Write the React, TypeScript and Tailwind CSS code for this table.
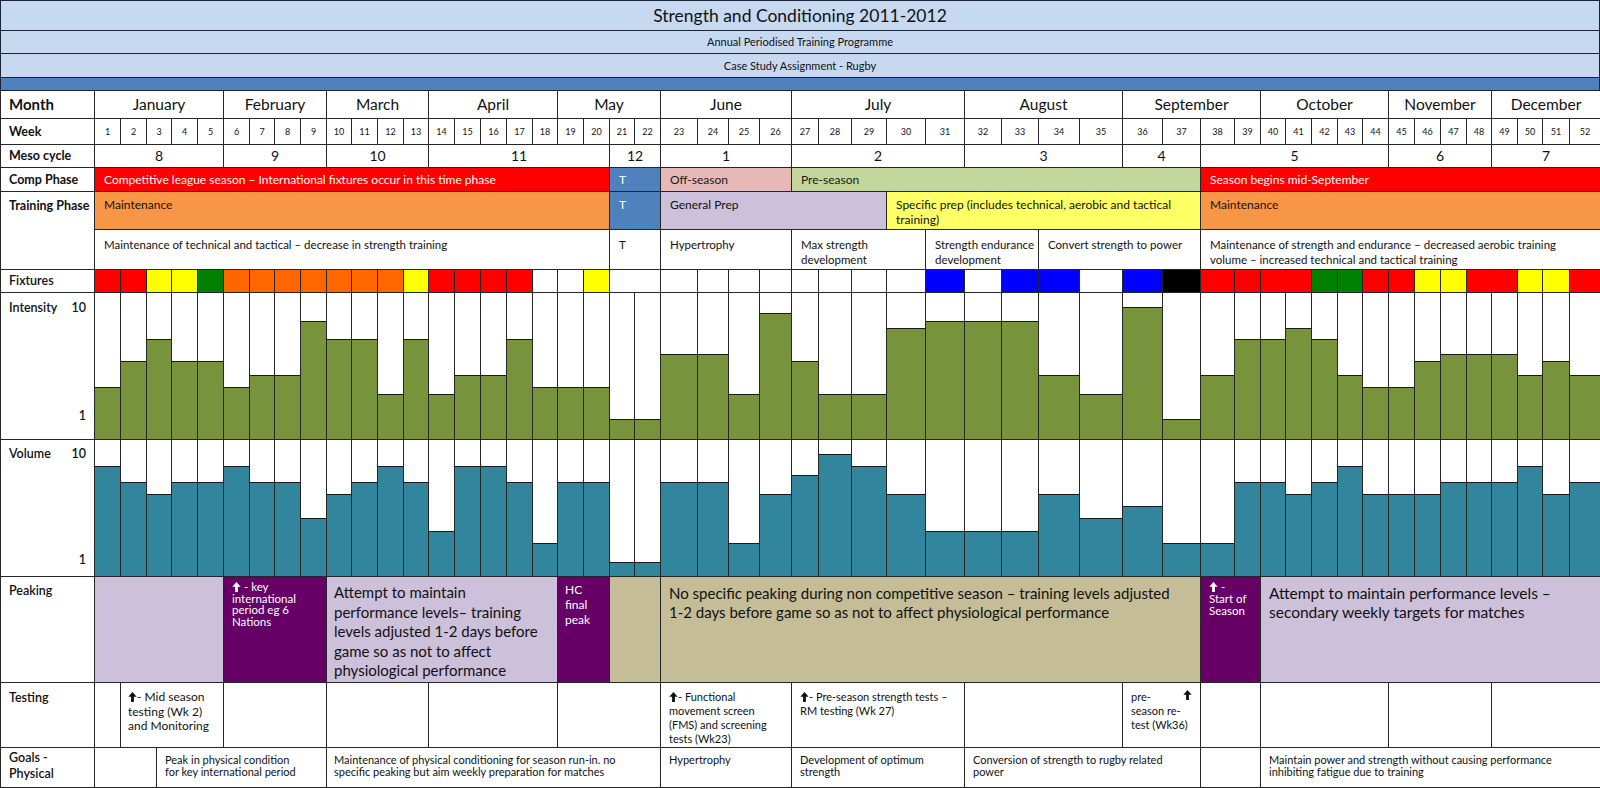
import React from 'react';

// bar heights in px, week 1..52
const INTENSITY = [52, 78, 100, 78, 78, 52, 64, 64, 118, 100, 100, 45, 100, 45, 64, 64, 100, 52, 52, 52, 20, 20, 85, 85, 45, 126, 78, 45, 45, 111, 118, 118, 118, 64, 45, 132, 20, 64, 100, 100, 111, 100, 64, 52, 52, 78, 85, 85, 85, 64, 78, 64];
const VOLUME = [110, 94, 82, 94, 94, 110, 94, 94, 58, 82, 94, 110, 94, 45, 110, 110, 94, 33, 94, 94, 14, 14, 94, 94, 33, 82, 101, 122, 110, 82, 45, 45, 45, 82, 58, 70, 33, 33, 94, 94, 82, 94, 110, 82, 82, 82, 94, 94, 94, 110, 82, 94];

const FIX_CODES = 'rryyg' + 'ooooooo' + 'y' + 'rrrr' + 'wwy' + 'ww' + 'wwwwwwww' + 'bwbbwbk' + 'rrrrggrryyrryyr';
const FIX_COLOR: Record<string, string> = {
  r: 'bg-[#ff0000]',
  y: 'bg-[#ffff00]',
  g: 'bg-[#008000]',
  o: 'bg-[#ff6600]',
  w: 'bg-white',
  b: 'bg-[#0000ff]',
  k: 'bg-black',
};

const MONTHS: [number, number, string][] = [
  [1, 5, 'January'], [6, 4, 'February'], [10, 4, 'March'], [14, 5, 'April'], [19, 4, 'May'], [23, 4, 'June'],
  [27, 5, 'July'], [32, 4, 'August'], [36, 4, 'September'], [40, 5, 'October'], [45, 4, 'November'], [49, 4, 'December'],
];

const MESO: [number, number, string][] = [
  [1, 5, '8'], [6, 4, '9'], [10, 4, '10'], [14, 7, '11'], [21, 2, '12'], [23, 4, '1'],
  [27, 5, '2'], [32, 4, '3'], [36, 2, '4'], [38, 7, '5'], [45, 4, '6'], [49, 4, '7'],
];

const COMP: [number, number, string, string][] = [
  [1, 20, 'bg-[#ff0000] text-white', 'Competitive league season – International fixtures occur in this time phase'],
  [21, 2, 'bg-[#4f81bd] text-white', 'T'],
  [23, 4, 'bg-[#e6b9b8] text-[#1a1a1a]', 'Off-season'],
  [27, 11, 'bg-[#c3d69b] text-[#1a1a1a]', 'Pre-season'],
  [38, 15, 'bg-[#ff0000] text-white', 'Season begins mid-September'],
];

const TRAINING: [number, number, string, string[]][] = [
  [1, 20, 'bg-[#f79646]', ['Maintenance']],
  [21, 2, 'bg-[#4f81bd] text-white', ['T']],
  [23, 7, 'bg-[#ccc0da]', ['General Prep']],
  [30, 8, 'bg-[#ffff66]', ['Specific prep (includes technical, aerobic and tactical', 'training)']],
  [38, 15, 'bg-[#f79646]', ['Maintenance']],
];

const FOCUS: [number, number, string[]][] = [
  [1, 20, ['Maintenance of technical and tactical – decrease in strength training']],
  [21, 2, ['T']],
  [23, 4, ['Hypertrophy']],
  [27, 4, ['Max strength', 'development']],
  [31, 3, ['Strength endurance', 'development']],
  [34, 4, ['Convert strength to power']],
  [38, 15, ['Maintenance of strength and endurance – decreased aerobic training', 'volume – increased technical and tactical training']],
];

function Up({ className = '' }: { className?: string }) {
  return (
    <svg viewBox="0 0 10 12" className={`inline-block w-[9px] h-[10px] align-[-1px] ${className}`} fill="currentColor">
      <path d="M5 0 L10 5.6 H6.7 V12 H3.3 V5.6 H0 Z" />
    </svg>
  );
}

function Lines({ l }: { l: string[] }) {
  return (
    <>
      {l.map((t, i) => (
        <React.Fragment key={i}>
          {i > 0 && <br />}
          {t}
        </React.Fragment>
      ))}
    </>
  );
}

function Cell({
  c,
  s = 1,
  r,
  rs,
  className = '',
  children,
}: {
  c: number;
  s?: number;
  r: number;
  rs?: number;
  className?: string;
  children?: React.ReactNode;
}) {
  return (
    <div
      className={`border-r border-b border-[#262626] overflow-hidden ${className}`}
      style={{ gridColumn: `${c + 1} / span ${s}`, gridRow: rs ? `${r} / span ${rs}` : `${r}` }}
    >
      {children}
    </div>
  );
}

export default function App() {
  const weeks = Array.from({ length: 52 }, (_, i) => i + 1);

  return (
    <div className="w-[1600px] h-[788px] overflow-hidden bg-white text-[#111] font-['Lato',sans-serif] leading-tight">
      {/* Title block */}
      <div className="border-l border-r border-[#1b2430]">
        <div className="h-[31px] border-t border-b border-[#1b2430] bg-[#c6d9f1] flex items-center justify-center text-[17.5px]">
          Strength and Conditioning 2011-2012
        </div>
        <div className="h-[23px] border-b border-[#1b2430] bg-[#c6d9f1] flex items-center justify-center text-[11px]">
          Annual Periodised Training Programme
        </div>
        <div className="h-[24px] border-b border-[#1b2430] bg-[#c6d9f1] flex items-center justify-center text-[11px]">
          Case Study Assignment - Rugby
        </div>
        <div className="h-[13px] border-b border-[#1b2430] bg-[#4f81bd]" />
      </div>

      {/* Plan grid */}
      <div className="grid border-l border-[#262626] grid-cols-[94px_26px_26px_25px_26px_26px_26px_25px_26px_26px_25px_26px_26px_25px_26px_26px_26px_26px_25px_26px_26px_25px_26px_37px_31px_31px_32px_27px_33px_35px_39px_39px_37px_37px_41px_43px_40px_38px_34px_26px_25px_26px_26px_25px_26px_26px_26px_26px_25px_26px_25px_27px_31px] grid-rows-[28px_26px_23px_24px_38px_40px_23px_147px_137px_106px_65px_40px]">
        {/* labels */}
        <Cell c={0} r={1} className="flex items-center pl-2 text-[15px] font-bold">Month</Cell>
        <Cell c={0} r={2} className="flex items-center pl-2 text-[12.5px] font-bold">Week</Cell>
        <Cell c={0} r={3} className="flex items-center pl-2 text-[12.5px] font-bold">Meso cycle</Cell>
        <Cell c={0} r={4} className="flex items-center pl-2 text-[12.5px] font-bold">Comp Phase</Cell>
        <Cell c={0} r={5} rs={2} className="pl-2 pt-[6px] text-[12.5px] font-bold">Training Phase</Cell>
        <Cell c={0} r={7} className="flex items-center pl-2 text-[12.5px] font-semibold">Fixtures</Cell>
        <Cell c={0} r={8} className="flex flex-col justify-between pl-2 pr-2 pt-[7px] pb-[15px] text-[12.5px] font-semibold">
          <div className="flex justify-between">
            <span>Intensity</span>
            <span>10</span>
          </div>
          <div className="text-right">1</div>
        </Cell>
        <Cell c={0} r={9} className="flex flex-col justify-between pl-2 pr-2 pt-[6px] pb-[8px] text-[12.5px] font-semibold">
          <div className="flex justify-between">
            <span>Volume</span>
            <span>10</span>
          </div>
          <div className="text-right">1</div>
        </Cell>
        <Cell c={0} r={10} className="pl-2 pt-[6px] text-[12.5px] font-semibold">Peaking</Cell>
        <Cell c={0} r={11} className="pl-2 pt-[7px] text-[12.5px] font-semibold">Testing</Cell>
        <Cell c={0} r={12} className="pl-2 pt-[2px] text-[12.5px] leading-[16px] font-semibold">
          Goals -<br />
          Physical
        </Cell>

        {/* months */}
        {MONTHS.map(([c, s, t]) => (
          <Cell key={t} c={c} s={s} r={1} className="flex items-center justify-center text-[15.5px]">
            {t}
          </Cell>
        ))}

        {/* week numbers */}
        {weeks.map((w) => (
          <Cell key={w} c={w} r={2} className="flex items-center justify-center text-[9px]">
            {w}
          </Cell>
        ))}

        {/* meso cycles */}
        {MESO.map(([c, s, t]) => (
          <Cell key={c} c={c} s={s} r={3} className="flex items-center justify-center text-[14px]">
            {t}
          </Cell>
        ))}

        {/* competition phase */}
        {COMP.map(([c, s, cls, t]) => (
          <Cell key={c} c={c} s={s} r={4} className={`flex items-center pl-[9px] text-[12px] ${cls}`}>
            {t}
          </Cell>
        ))}

        {/* training phase */}
        {TRAINING.map(([c, s, cls, l]) => (
          <Cell key={c} c={c} s={s} r={5} className={`pl-[9px] pt-[5px] text-[12px] leading-[15px] ${cls}`}>
            <Lines l={l} />
          </Cell>
        ))}
        {FOCUS.map(([c, s, l]) => (
          <Cell key={c} c={c} s={s} r={6} className="pl-[9px] pt-[7px] text-[11.5px] leading-[15px]">
            <Lines l={l} />
          </Cell>
        ))}

        {/* fixtures */}
        {weeks
          .filter((w) => w !== 22)
          .map((w) => (
            <Cell key={w} c={w} s={w === 21 ? 2 : 1} r={7} className={FIX_COLOR[FIX_CODES[w - 1]]} />
          ))}

        {/* intensity */}
        {weeks.map((w) => (
          <Cell key={w} c={w} r={8} className="flex flex-col justify-end bg-white">
            <div className="bg-[#77933c] border-t border-[#1a1a1a]" style={{ height: INTENSITY[w - 1] }} />
          </Cell>
        ))}

        {/* volume */}
        {weeks.map((w) => (
          <Cell key={w} c={w} r={9} className="flex flex-col justify-end bg-white">
            <div className="bg-[#31859c] border-t border-[#1a1a1a]" style={{ height: VOLUME[w - 1] }} />
          </Cell>
        ))}

        {/* peaking */}
        <Cell c={1} s={5} r={10} className="bg-[#ccc0da]" />
        <Cell c={6} s={4} r={10} className="bg-[#660066] text-white pl-[8px] pt-[4px] text-[11.5px] leading-[11.5px]">
          <Up /> - key
          <br />
          international
          <br />
          period eg 6
          <br />
          Nations
        </Cell>
        <Cell c={10} s={9} r={10} className="bg-[#ccc0da] pl-[7px] pt-[6px] text-[15px] leading-[19.5px] whitespace-nowrap">
          <Lines
            l={[
              'Attempt to maintain',
              'performance levels– training',
              'levels adjusted 1-2 days before',
              'game so as not to affect',
              'physiological performance',
            ]}
          />
        </Cell>
        <Cell c={19} s={2} r={10} className="bg-[#660066] text-white pl-[7px] pt-[5px] text-[12px] leading-[15px]">
          HC
          <br />
          final
          <br />
          peak
        </Cell>
        <Cell c={21} s={2} r={10} className="bg-[#c4bd97]" />
        <Cell c={23} s={15} r={10} className="bg-[#c4bd97] pl-[8px] pt-[7px] text-[15px] leading-[19px] whitespace-nowrap">
          <Lines
            l={[
              'No specific peaking during non competitive season – training levels adjusted',
              '1-2 days before game so as not to affect physiological performance',
            ]}
          />
        </Cell>
        <Cell c={38} s={2} r={10} className="bg-[#660066] text-white pl-[8px] pt-[4px] text-[11.5px] leading-[12px]">
          <Up /> -
          <br />
          Start of
          <br />
          Season
        </Cell>
        <Cell c={40} s={13} r={10} className="bg-[#ccc0da] pl-[8px] pt-[7px] text-[15.5px] leading-[19px] whitespace-nowrap">
          <Lines l={['Attempt to maintain performance levels –', 'secondary weekly targets for matches']} />
        </Cell>

        {/* testing */}
        <Cell c={1} r={11} />
        <Cell c={2} s={4} r={11} className="pl-[7px] pt-[7px] text-[12px] leading-[14.5px]">
          <Up />- Mid season
          <br />
          testing (Wk 2)
          <br />
          and Monitoring
        </Cell>
        <Cell c={6} s={4} r={11} />
        <Cell c={10} s={4} r={11} />
        <Cell c={14} s={5} r={11} />
        <Cell c={19} s={4} r={11} />
        <Cell c={23} s={4} r={11} className="pl-[8px] pt-[7px] text-[11px] leading-[14px]">
          <Up />- Functional
          <br />
          movement screen
          <br />
          (FMS) and screening
          <br />
          tests (Wk23)
        </Cell>
        <Cell c={27} s={5} r={11} className="pl-[8px] pt-[7px] text-[11px] leading-[14px]">
          <Up />- Pre-season strength tests –
          <br />
          RM testing (Wk 27)
        </Cell>
        <Cell c={32} s={4} r={11} />
        <Cell c={36} s={2} r={11} className="pl-[8px] pr-[8px] pt-[7px] text-[11px] leading-[14px]">
          <div className="flex justify-between">
            <span>pre-</span>
            <Up />
          </div>
          season re-
          <br />
          test (Wk36)
        </Cell>
        <Cell c={38} s={2} r={11} />
        <Cell c={40} s={5} r={11} />
        <Cell c={45} s={4} r={11} />
        <Cell c={49} s={4} r={11} />

        {/* goals - physical */}
        <Cell c={1} s={52} r={12} className="!border-r-0 flex text-[11px] leading-[11.5px]">
          <div className="w-[62px] border-r border-[#262626]" />
          <div className="w-[170px] border-r border-[#262626] pl-[8px] pt-[6px]">
            Peak in physical condition
            <br />
            for key international period
          </div>
          <div className="w-[334px] border-r border-[#262626] pl-[7px] pt-[6px]">
            Maintenance of physical conditioning for season run-in. no
            <br />
            specific peaking but aim weekly preparation for matches
          </div>
          <div className="w-[131px] border-r border-[#262626] pl-[8px] pt-[6px]">Hypertrophy</div>
          <div className="w-[173px] border-r border-[#262626] pl-[8px] pt-[6px]">
            Development of optimum
            <br />
            strength
          </div>
          <div className="w-[236px] border-r border-[#262626] pl-[8px] pt-[6px]">
            Conversion of strength to rugby related
            <br />
            power
          </div>
          <div className="w-[60px] border-r border-[#262626]" />
          <div className="w-[340px] border-r border-[#262626] pl-[8px] pt-[6px]">
            Maintain power and strength without causing performance
            <br />
            inhibiting fatigue due to training
          </div>
        </Cell>
      </div>
    </div>
  );
}
